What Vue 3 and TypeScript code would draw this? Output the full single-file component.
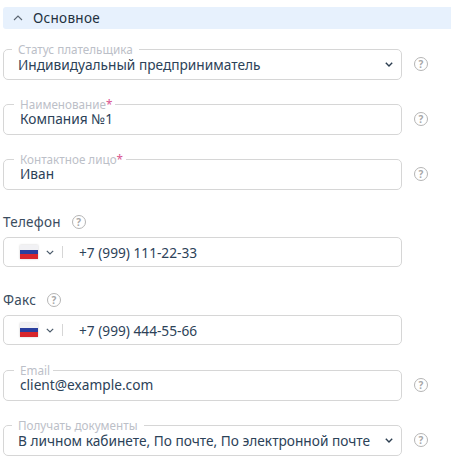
<script setup lang="ts">
type Row =
    | { kind: "outlined"; label: string; value: string; required?: boolean; select?: boolean }
    | { kind: "phone"; label: string; value: string };

const rows: Row[] = [
    { kind: "outlined", label: "Статус плательщика", value: "Индивидуальный предприниматель", select: true },
    { kind: "outlined", label: "Наименование", value: "Компания №1", required: true },
    { kind: "outlined", label: "Контактное лицо", value: "Иван", required: true },
    { kind: "phone", label: "Телефон", value: "+7 (999) 111-22-33" },
    { kind: "phone", label: "Факс", value: "+7 (999) 444-55-66" },
    { kind: "outlined", label: "Email", value: "client@example.com" },
    { kind: "outlined", label: "Получать документы", value: "В личном кабинете, По почте, По электронной почте", select: true },
];
</script>

<template>
    <div class="form">
        <header class="section">
            <svg class="section__arrow" width="10" height="6" viewBox="0 0 10 6">
                <path d="M1 5l4-4 4 4" fill="none" stroke="#5b6672" stroke-width="1.1" />
            </svg>
            <span>Основное</span>
        </header>

        <template v-for="row in rows" :key="row.label">
            <div v-if="row.kind === 'outlined'" class="row">
                <fieldset class="box" :class="{ 'box--select': row.select }">
                    <legend class="box__legend">
                        {{ row.label }}<span v-if="row.required" class="box__star">*</span>
                    </legend>
                    <span class="box__value">{{ row.value }}</span>
                    <svg v-if="row.select" class="box__chevron" width="8" height="5" viewBox="0 0 8 5">
                        <path d="M.8.8L4 4l3.2-3.2" fill="none" stroke="#2c3e50" stroke-width="1.4" />
                    </svg>
                </fieldset>
                <span class="help help--row">?</span>
            </div>

            <div v-else class="phone">
                <div class="phone__label">
                    <span>{{ row.label }}</span>
                    <span class="help">?</span>
                </div>
                <div class="phone__input">
                    <span class="flag"><i /><i /><i /></span>
                    <svg class="phone__chevron" width="8" height="5" viewBox="0 0 8 5">
                        <path d="M.8.8L4 4l3.2-3.2" fill="none" stroke="#4a5a6a" stroke-width="1.2" />
                    </svg>
                    <span class="phone__divider" />
                    <span class="phone__value">{{ row.value }}</span>
                </div>
            </div>
        </template>
    </div>
</template>

<style scoped>
.form {
    width: 451px;
    height: 463px;
    overflow: hidden;
    padding-top: 7px;
    box-sizing: border-box;
    font-family: "Noto Sans", sans-serif;
    font-size: 13.7px;
    color: #2c4258;
}

.section {
    display: flex;
    align-items: center;
    height: 22px;
    margin-left: 3px;
    padding-left: 10px;
    gap: 10px;
    background: #e7f1fd;
    border-radius: 3px 0 0 3px;
    font-size: 13.5px;
    color: #22303e;
    letter-spacing: 0.3px;
}

.row {
    display: flex;
    align-items: flex-end;
    height: 42px;
    margin: 13px 0 0 3px;
}

.section + .row {
    margin-top: 9px;
}

.phone + .row {
    margin-top: 14px;
}

.box {
    display: flex;
    align-items: center;
    box-sizing: border-box;
    width: 399px;
    min-width: 0;
    height: 36px;
    margin: 0;
    padding: 0 8px 6px 16px;
    border: 1px solid #d6d6d6;
    border-radius: 5px;
}

.box--select {
    padding-left: 14px;
    padding-bottom: 5px;
}

.box__legend {
    margin-left: -6px;
    padding: 0 3px 0 6px;
    font-size: 11.7px;
    line-height: 11px;
    color: #bcc0c8;
    white-space: nowrap;
}

.box--select .box__legend {
    padding: 0 6px 0 6px;
    margin-left: -6px;
}

.box__star {
    color: #d9548f;
}

.box__value {
    flex: 1;
    line-height: 20px;
    white-space: nowrap;
}

.box__chevron {
    flex: none;
}

.help {
    display: inline-flex;
    align-items: center;
    justify-content: center;
    box-sizing: border-box;
    width: 14px;
    height: 14px;
    border: 1.2px solid #b5b5b5;
    border-radius: 50%;
    font-size: 10px;
    font-weight: 700;
    line-height: 1;
    color: #a8a8a8;
}

.help--row {
    margin: 0 0 9px 12px;
}

.phone {
    margin-top: 23px;
}

.row + .phone {
    margin-top: 22px;
}

.phone__label {
    display: flex;
    align-items: center;
    gap: 11px;
    height: 20px;
    margin-left: 3px;
    font-size: 13.5px;
    letter-spacing: 0.25px;
    color: #3a4c5e;
}

.phone__input {
    display: flex;
    align-items: center;
    box-sizing: border-box;
    width: 399px;
    height: 30px;
    margin: 5px 0 0 3px;
    padding-left: 16px;
    border: 1px solid #d6d6d6;
    border-radius: 5px;
}

.flag {
    display: flex;
    flex-direction: column;
    width: 18px;
    height: 14px;
    box-shadow: 0 0 2px rgba(0, 0, 0, 0.2);
}

.flag i {
    flex: 1;
    background: #f1f1f4;
}

.flag i:nth-child(2) {
    background: #2a3f9e;
}

.flag i:nth-child(3) {
    background: #d8262c;
}

.phone__chevron {
    margin-left: 8px;
}

.phone__divider {
    width: 1px;
    height: 12px;
    margin: 0 16px 0 8px;
    background: #d6d6d6;
}

.phone__value {
    white-space: nowrap;
}
</style>

<style>
body {
    background: #fff;
}
</style>
